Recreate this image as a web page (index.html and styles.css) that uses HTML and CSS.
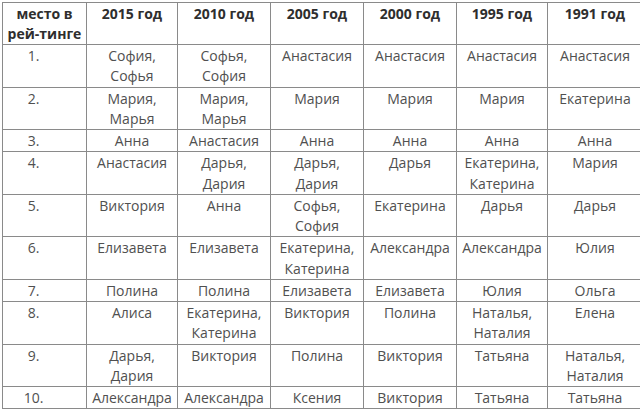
FILE: index.html
```html
<!DOCTYPE html>
<html lang="ru">
<head>
<meta charset="utf-8">
<link rel="stylesheet" href="styles.css">
</head>
<body>
<table class="names">
<colgroup>
<col class="c-place"><col class="c-91"><col class="c-93"><col class="c-93"><col class="c-93"><col class="c-91"><col class="c-last">
</colgroup>
<thead>
<tr><th>место в рей-тинге</th><th>2015 год</th><th>2010 год</th><th>2005 год</th><th>2000 год</th><th>1995 год</th><th>1991 год</th></tr>
</thead>
<tbody>
<tr><td class="num">1.</td><td>София, Софья</td><td>Софья, София</td><td>Анастасия</td><td>Анастасия</td><td>Анастасия</td><td>Анастасия</td></tr>
<tr><td class="num">2.</td><td>Мария, Марья</td><td>Мария, Марья</td><td>Мария</td><td>Мария</td><td>Мария</td><td>Екатерина</td></tr>
<tr><td class="num">3.</td><td>Анна</td><td>Анастасия</td><td>Анна</td><td>Анна</td><td>Анна</td><td>Анна</td></tr>
<tr><td class="num">4.</td><td>Анастасия</td><td>Дарья, Дария</td><td>Дарья, Дария</td><td>Дарья</td><td>Екатерина, Катерина</td><td>Мария</td></tr>
<tr><td class="num">5.</td><td>Виктория</td><td>Анна</td><td>Софья, София</td><td>Екатерина</td><td>Дарья</td><td>Дарья</td></tr>
<tr><td class="num">6.</td><td>Елизавета</td><td>Елизавета</td><td>Екатерина, Катерина</td><td>Александра</td><td>Александра</td><td>Юлия</td></tr>
<tr><td class="num">7.</td><td>Полина</td><td>Полина</td><td>Елизавета</td><td>Елизавета</td><td>Юлия</td><td>Ольга</td></tr>
<tr><td class="num">8.</td><td>Алиса</td><td>Екатерина, Катерина</td><td>Виктория</td><td>Полина</td><td>Наталья, Наталия</td><td>Елена</td></tr>
<tr><td class="num">9.</td><td>Дарья, Дария</td><td>Виктория</td><td>Полина</td><td>Виктория</td><td>Татьяна</td><td>Наталья, Наталия</td></tr>
<tr><td class="num">10.</td><td>Александра</td><td>Александра</td><td>Ксения</td><td>Виктория</td><td>Татьяна</td><td>Татьяна</td></tr>
</tbody>
</table>
</body>
</html>
```
FILE: styles.css
```css
html, body {
  margin: 0;
  padding: 0;
  background: #fff;
  overflow: hidden;
}
body {
  padding: 2px 0 0 2px;
  font-family: "Open Sans", "DejaVu Sans", sans-serif;
}
.names {
  border-collapse: collapse;
  table-layout: fixed;
  width: 640px;
  font-size: 14px;
  line-height: 20.25px;
}
.c-place { width: 84px; }
.c-91 { width: 91px; }
.c-93 { width: 93px; }
.c-last { width: 95px; }
.names th,
.names td {
  border: 1px solid #8a8a8a;
  padding: 0 2px;
  text-align: center;
  vertical-align: top;
}
.names th {
  font-weight: 700;
  color: #2e2e2e;
  height: 40px;
  padding-top: 1px;
  padding-bottom: 0;
  line-height: 20px;
}
.names td {
  color: #505050;
  padding-top: 1px;
  padding-bottom: 0;
}
.names td.num {
  padding-right: 24px;
}
```
